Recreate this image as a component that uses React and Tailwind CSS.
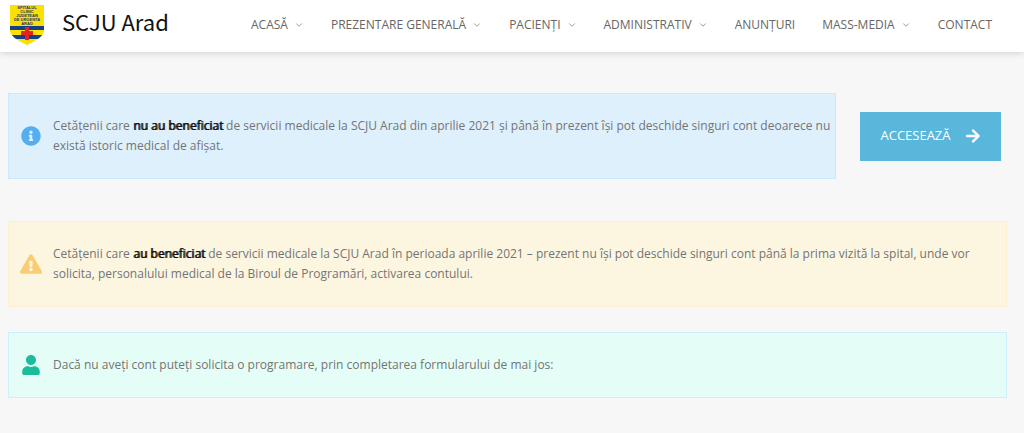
import React from "react";
import { FaInfoCircle, FaExclamationTriangle, FaUser, FaArrowRight } from "react-icons/fa";
import { FiChevronDown } from "react-icons/fi";

const MENU = [
  { label: "ACASĂ", sub: true },
  { label: "PREZENTARE GENERALĂ", sub: true },
  { label: "PACIENȚI", sub: true },
  { label: "ADMINISTRATIV", sub: true },
  { label: "ANUNȚURI" },
  { label: "MASS-MEDIA", sub: true },
  { label: "CONTACT" },
];

const CREST_LINES = ["SPITALUL", "CLINIC", "JUDETEAN", "DE URGENTA", "ARAD"];

function Crest() {
  return (
    <svg viewBox="0 0 34 40" className="h-10 w-[34px] shrink-0" aria-hidden="true">
      <defs>
        <clipPath id="shield">
          <path d="M0 0H34V25C34 31 27 35 17 40C7 35 0 31 0 25Z" />
        </clipPath>
      </defs>
      <g clipPath="url(#shield)">
        <rect width="34" height="40" fill="#fbe000" />
        <rect y="21" width="34" height="4" fill="#173f86" />
        <rect y="30" width="34" height="4" fill="#173f86" />
      </g>
      <path d="M15 22H19V26H23V30H19V35H15V30H11V26H15Z" fill="#e42320" />
      <g fill="#26356b" fontFamily="Liberation Sans, sans-serif" fontSize="4" fontWeight="700" textAnchor="middle">
        {CREST_LINES.map((line, i) => (
          <text key={line} x="17" y={4 + i * 4}>{line}</text>
        ))}
      </g>
    </svg>
  );
}

function Strong({ children }) {
  return <b className="font-normal text-[#111] [text-shadow:1px_0_0_#111]">{children}</b>;
}

function Notice({ icon: Icon, iconSize = 20, iconClass, className, children }) {
  return (
    <div className={`flex items-center border pl-[11px] pr-1 py-[22px] ${className}`}>
      <span className="flex w-[22px] shrink-0 justify-center">
        <Icon size={iconSize} className={iconClass} />
      </span>
      <p className="ml-[11px] flex-1 text-[12px] leading-[20px] text-[#747474]">{children}</p>
    </div>
  );
}

export default function App() {
  return (
    <div className="min-h-screen bg-[#f7f7f7] font-['Open_Sans',sans-serif]">
      <header className="flex h-[52px] items-center justify-between bg-white pl-[10px] pr-8 pb-[3px] shadow-[0_0_8px_rgba(0,0,0,0.2)]">
        <a href="#" className="flex items-center gap-[18px]">
          <Crest />
          <span className="whitespace-nowrap pb-2 font-['Noto_Sans_CJK_SC',sans-serif] text-[22px] leading-8 text-[#111]">SCJU Arad</span>
        </a>
        <nav className="flex items-center gap-[27px] whitespace-nowrap text-[12px] text-[#666]">
          {MENU.map(({ label, sub }) => (
            <a key={label} href="#" className="flex items-center gap-[6px]">
              {label}
              {sub && <FiChevronDown size={10} className="text-[#888]" />}
            </a>
          ))}
        </nav>
      </header>

      <main className="pl-2 pr-[17px] pt-[41px] pb-8">
        <div className="flex items-center gap-6">
          <Notice icon={FaInfoCircle} iconClass="text-[#54aeef]" className="flex-1 border-[#cbe9fc] bg-[#dff0fd]">
            Cetățenii care <Strong>nu au beneficiat</Strong> de servicii medicale la SCJU Arad din aprilie 2021 și până
            în prezent își pot deschide singuri cont deoarece nu există istoric medical de afișat.
          </Notice>
          <a
            href="#"
            className="mr-[6px] flex h-[49px] w-[141px] shrink-0 items-center justify-center gap-[14px] bg-[#58b7da] text-[13px] text-white"
          >
            ACCESEAZĂ
            <FaArrowRight size={16} />
          </a>
        </div>

        <Notice
          icon={FaExclamationTriangle}
          iconSize={22}
          iconClass="text-[#facd75]"
          className="mt-[42px] border-[#fcefd2] bg-[#fcf6e1]"
        >
          Cetățenii care <Strong>au beneficiat</Strong> de servicii medicale la SCJU Arad în perioada aprilie 2021 –
          prezent nu își pot deschide singuri cont până la prima vizită la spital, unde vor solicita, personalului
          medical de la Biroul de Programări, activarea contului.
        </Notice>

        <Notice icon={FaUser} iconClass="text-[#1abc9c]" className="mt-[25px] border-[#cdeffb] bg-[#e4fdf7]">
          Dacă nu aveți cont puteți solicita o programare, prin completarea formularului de mai jos:
        </Notice>
      </main>
    </div>
  );
}
